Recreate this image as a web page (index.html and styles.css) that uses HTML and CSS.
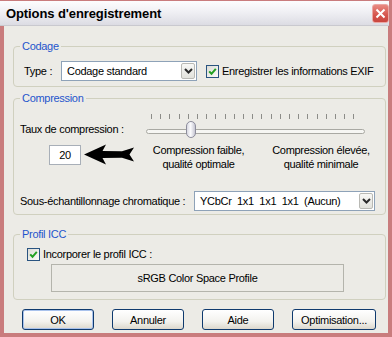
FILE: index.html
```html
<!DOCTYPE html>
<html lang="fr">
<head>
  <meta charset="UTF-8">
  <meta name="viewport" content="width=device-width, initial-scale=1.0">
  <title>Options d'enregistrement</title>
  <link rel="stylesheet" href="styles.css">
</head>
<body>
  <div class="window">
    <div class="titlebar">
      <span class="title">Options d'enregistrement</span>
      <span class="close-btn">
        <svg width="11" height="11" viewBox="0 0 11 11"><path d="M1.5 1.5L9.5 9.5M9.5 1.5L1.5 9.5" stroke="#fff" stroke-width="2"/></svg>
      </span>
    </div>

    <div class="client">
      <fieldset class="group group-codage">
        <legend>Codage</legend>
        <div class="group-body codage-body">
          <span class="label type-label">Type :</span>
          <div class="select select-type">
            <span class="select-text">Codage standard</span>
            <span class="drop"><svg width="9" height="6" viewBox="0 0 9 6"><path d="M1 1L4.5 4.5L8 1" stroke="#2b2b2b" stroke-width="2" fill="none"/></svg></span>
          </div>
          <span class="check">
            <span class="check-box"><svg width="11" height="11" viewBox="0 0 11 11"><path d="M2.2 5.4L4.5 7.8L8.8 2.8" stroke="#22a022" stroke-width="2" fill="none"/></svg></span>
            <span class="label">Enregistrer les informations EXIF</span>
          </span>
        </div>
      </fieldset>

      <fieldset class="group group-comp">
        <legend>Compression</legend>
        <div class="group-body comp-body">
          <div class="comp-top">
            <div class="comp-left">
              <div class="label rate-label">Taux de compression :</div>
              <div class="rate-row">
                <div class="input">20</div>
                <svg class="arrow" width="50" height="21" viewBox="0 0 50 21">
                  <path d="M0 10.5L22 0.5L18.5 7L38 7.2L50 3.5L45.5 10.5L50 17.5L38 13.8L18.5 14L22 20.5Z" fill="#000"/>
                </svg>
              </div>
            </div>
            <div class="comp-right">
              <div class="slider">
                <div class="ticks"></div>
                <div class="track"></div>
                <div class="thumb"></div>
              </div>
              <div class="scale-labels">
                <div class="scale-label scale-low">Compression faible,<br>qualité optimale</div>
                <div class="scale-label scale-high">Compression élevée,<br>qualité minimale</div>
              </div>
            </div>
          </div>
          <div class="chroma-row">
            <span class="label chroma-label">Sous-échantillonnage chromatique :</span>
            <div class="select select-chroma">
              <span class="select-text">YCbCr&nbsp; 1x1&nbsp; 1x1&nbsp; 1x1&nbsp; (Aucun)</span>
              <span class="drop"><svg width="9" height="6" viewBox="0 0 9 6"><path d="M1 1L4.5 4.5L8 1" stroke="#2b2b2b" stroke-width="2" fill="none"/></svg></span>
            </div>
          </div>
        </div>
      </fieldset>

      <fieldset class="group group-icc">
        <legend>Profil ICC</legend>
        <div class="group-body icc-body">
          <span class="check">
            <span class="check-box"><svg width="11" height="11" viewBox="0 0 11 11"><path d="M2.2 5.4L4.5 7.8L8.8 2.8" stroke="#22a022" stroke-width="2" fill="none"/></svg></span>
            <span class="label">Incorporer le profil ICC :</span>
          </span>
          <div class="profile-box">sRGB Color Space Profile</div>
        </div>
      </fieldset>

      <div class="buttons">
        <button class="btn btn-default">OK</button>
        <button class="btn">Annuler</button>
        <button class="btn">Aide</button>
        <button class="btn btn-wide">Optimisation...</button>
      </div>
    </div>
  </div>
</body>
</html>
```

FILE: styles.css
```css
html, body {
  margin: 0;
  padding: 0;
}
body {
  font-family: 'Liberation Sans', Arial, sans-serif;
  font-size: 11px;
  letter-spacing: -0.3px;
  color: #000;
  background-color: #c97c7d;
}
.window {
  width: 392px;
  height: 337px;
  display: flex;
  flex-direction: column;
  background-color: #c97c7d;
}
.titlebar {
  height: 24px;
  margin: 1px 3px 0 0;
  display: flex;
  align-items: center;
  justify-content: space-between;
  background: linear-gradient(#fdfdfe, #f0f0f4 45%, #dcdce3);
  border-bottom: 1px solid #c9c9cf;
}
.title {
  font-weight: bold;
  font-size: 13px;
  letter-spacing: -0.1px;
  padding-left: 6px;
  padding-top: 1px;
}
.close-btn {
  width: 17px;
  height: 19px;
  margin-right: 0;
  display: flex;
  align-items: center;
  justify-content: center;
  border-radius: 3px;
  border: 1px solid #eba8a4;
  background: linear-gradient(#e88a82, #d5544c 60%, #c9463f);
  box-sizing: border-box;
}
.client {
  flex: 1;
  margin: 0 4px 4px 4px;
  background-color: #ecebe6;
  display: flex;
  flex-direction: column;
}
.group {
  margin: 0 0 0 9px;
  padding: 0;
  width: 373px;
  min-width: 0;
  box-sizing: border-box;
  border: 1px solid #d0d0bf;
  border-radius: 4px;
}
.group legend {
  margin-left: 6px;
  padding: 0 2px;
  line-height: 12px;
  color: #1f55cc;
}
.group-codage {
  margin-top: 14px;
  height: 47px;
}
.group-comp {
  margin-top: 5px;
  height: 123px;
}
.group-icc {
  margin-top: 13px;
  height: 72px;
}
.label {
  line-height: 13px;
  white-space: nowrap;
}
.codage-body {
  padding: 9px 0 0 10px;
  display: flex;
  align-items: center;
}
.type-label {
  width: 37px;
}
.select {
  height: 20px;
  box-sizing: border-box;
  border: 1px solid #8ea2b8;
  background-color: #fff;
  display: flex;
  align-items: center;
}
.select-text {
  flex: 1;
  padding-left: 5px;
  white-space: nowrap;
}
.drop {
  width: 14px;
  height: 16px;
  margin-right: 1px;
  box-sizing: border-box;
  border: 1px solid #b9b9b4;
  border-radius: 2px;
  background: linear-gradient(#f8f8f6, #e2e2dc);
  display: flex;
  align-items: center;
  justify-content: center;
}
.select-type {
  width: 136px;
}
.check {
  display: flex;
  align-items: center;
}
.codage-body .check {
  margin-left: 9px;
}
.check-box {
  width: 13px;
  height: 13px;
  box-sizing: border-box;
  border: 1px solid #2a5480;
  background: linear-gradient(135deg, #dcdcd6, #fbfbf9);
  display: flex;
  align-items: center;
  justify-content: center;
  margin-right: 3px;
}
.comp-body {
  padding: 7px 0 0 6px;
}
.comp-top {
  display: flex;
}
.comp-left {
  width: 126px;
}
.rate-label {
  margin-top: 12px;
}
.rate-row {
  margin: 9px 0 0 29px;
  display: flex;
  align-items: flex-start;
}
.input {
  width: 32px;
  height: 20px;
  box-sizing: border-box;
  border: 1px solid #a8afb8;
  background-color: #fff;
  text-align: center;
  line-height: 18px;
}
.arrow {
  margin: -1px 0 0 3px;
}
.comp-right {
  width: 227px;
}
.slider {
  position: relative;
  width: 219px;
  height: 30px;
}
.ticks {
  position: absolute;
  left: 5px;
  top: 3px;
  width: 212px;
  height: 5px;
  background: repeating-linear-gradient(to right, #8c8c88 0, #8c8c88 1px, transparent 1px, transparent 9.2px);
}
.track {
  position: absolute;
  left: 0;
  top: 18px;
  width: 219px;
  height: 5px;
  box-sizing: border-box;
  border: 1px solid #a9a9a3;
  border-radius: 3px;
  background-color: #f6f6f3;
}
.thumb {
  position: absolute;
  left: 40px;
  top: 10px;
  width: 10px;
  height: 17px;
  box-sizing: border-box;
  border: 1px solid #8d8d9c;
  border-radius: 5px;
  background: linear-gradient(to right, #d9d9e2, #fbfbfd 45%, #c6c6d2);
}
.scale-labels {
  display: flex;
  margin-top: 2px;
}
.scale-label {
  line-height: 14px;
  text-align: center;
  white-space: nowrap;
}
.scale-low {
  width: 105px;
}
.scale-high {
  width: 104px;
  margin-left: 18px;
}
.chroma-row {
  margin-top: 20px;
  display: flex;
  align-items: center;
}
.chroma-label {
  width: 174px;
}
.select-chroma {
  width: 181px;
}
.icc-body {
  padding: 8px 0 0 13px;
}
.profile-box {
  margin: 3px 0 0 24px;
  width: 293px;
  height: 28px;
  box-sizing: border-box;
  border: 1px solid #b4b4ac;
  display: flex;
  align-items: center;
  justify-content: center;
}
.buttons {
  margin: 9px 0 0 18px;
  display: flex;
  gap: 18px;
}
.btn {
  width: 72px;
  height: 21px;
  padding: 0;
  font-family: inherit;
  font-size: 11px;
  letter-spacing: -0.3px;
  color: #000;
  border: 1px solid #0f3a6e;
  border-radius: 3px;
  background: linear-gradient(#ffffff, #f3f2ee 60%, #dcd8cd);
}
.btn-default {
  box-shadow: inset 0 0 0 1px #a9c2ec;
}
.btn-wide {
  width: 84px;
}
```
